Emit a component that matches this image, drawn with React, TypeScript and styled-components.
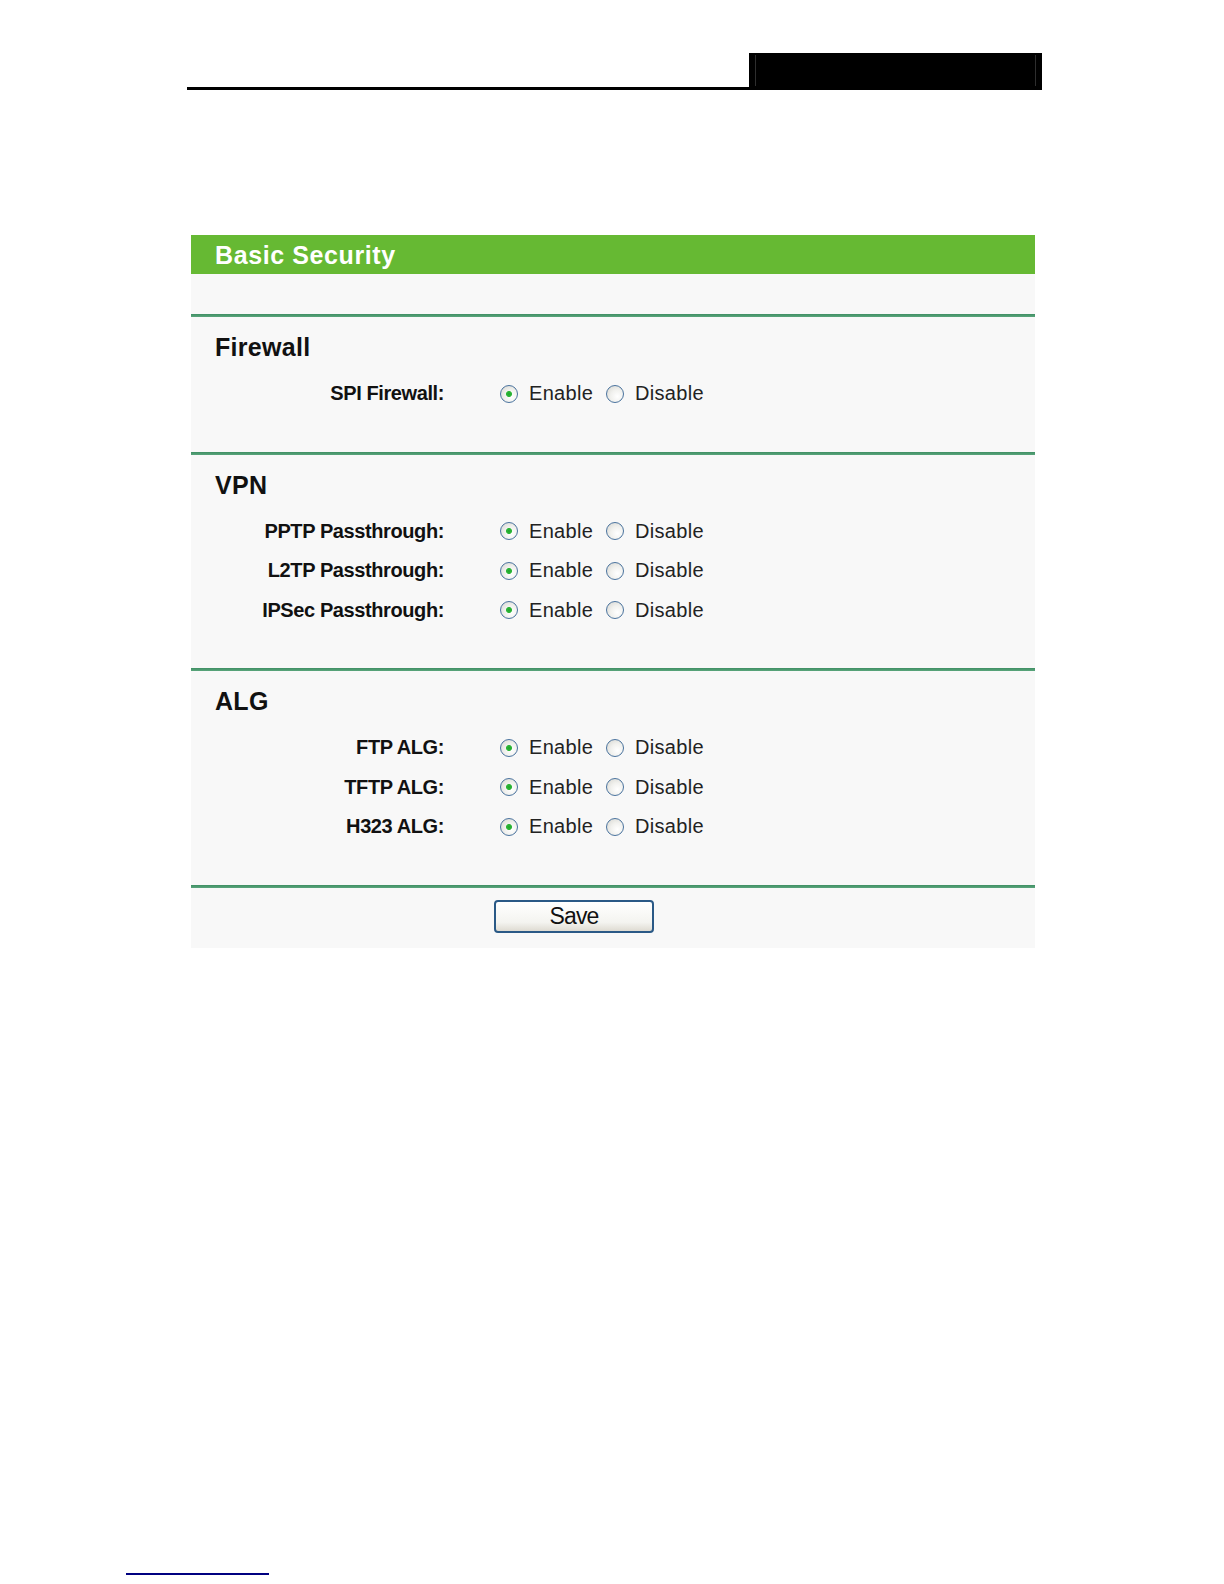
import { createGlobalStyle, styled } from "styled-components";

const GlobalStyle = createGlobalStyle`
    html, body {
        margin: 0;
        padding: 0;
        background: #ffffff;
    }
    body {
        font-family: "Liberation Sans", Arial, sans-serif;
        color: #000;
    }
`;

const Page = styled.div`
    width: 1224px;
    min-height: 1584px;
    display: flex;
    flex-direction: column;
`;

const TopBar = styled.header`
    display: flex;
    align-items: flex-end;
    width: 855px;
    height: 37px;
    margin: 53px 0 0 187px;
`;

const TopRule = styled.div`
    flex: 1;
    height: 3px;
    background: #000;
`;

const TopTab = styled.div`
    width: 293px;
    height: 37px;
    background: #000;
    box-sizing: border-box;
    padding: 2px 6px 4px;
    display: flex;
`;

const TopTabInner = styled.div`
    flex: 1;
    border-left: 1px solid #2e2e2e;
    border-right: 1px solid #2e2e2e;
`;

const Panel = styled.section`
    width: 844px;
    margin: 145px 0 0 191px;
    background: #f8f8f8;
    padding-bottom: 15px;
`;

const TitleBar = styled.h1`
    margin: 0;
    height: 39px;
    line-height: 40px;
    padding-left: 24px;
    background: #66b933;
    color: #fff;
    font-size: 25px;
    font-weight: bold;
    letter-spacing: 0.6px;
`;

const Spacer = styled.div`
    height: 40px;
`;

const Divider = styled.hr`
    margin: 0;
    border: none;
    height: 3px;
    background: linear-gradient(#3f8f63, #5aa57c);
`;

const Section = styled.div`
    padding: 15px 0 38px;
`;

const SectionTitle = styled.h2`
    margin: 0 0 12px 24px;
    height: 30px;
    line-height: 30px;
    font-size: 25px;
    font-weight: bold;
    letter-spacing: 0.3px;
    color: #111;
`;

const Row = styled.div`
    display: flex;
    align-items: center;
    height: 39.5px;
`;

const Label = styled.label`
    width: 253px;
    text-align: right;
    font-size: 20px;
    font-weight: bold;
    letter-spacing: -0.4px;
    color: #111;
`;

const Options = styled.div`
    display: flex;
    align-items: center;
    margin-left: 56px;
`;

const Radio = styled.input.attrs({ type: "radio" })`
    appearance: none;
    -webkit-appearance: none;
    width: 18px;
    height: 18px;
    margin: 0;
    border-radius: 50%;
    border: 1.5px solid #4a739e;
    box-sizing: border-box;
    background: radial-gradient(circle at 65% 65%, #ffffff 0, #f1f1ee 45%, #d4d4cf 100%);
    &:checked {
        background:
            radial-gradient(circle, #1fa32a 0, #2fb83a 2.6px, rgba(255, 255, 255, 0) 3.4px),
            radial-gradient(circle at 65% 65%, #ffffff 0, #f1f1ee 45%, #d4d4cf 100%);
    }
`;

const OptionText = styled.span<{ gapAfter?: number }>`
    font-size: 20px;
    letter-spacing: 0.3px;
    color: #222;
    margin: 0 ${({ gapAfter }) => gapAfter ?? 0}px 0 11px;
`;

const Footer = styled.div`
    padding-top: 12px;
`;

const SaveButton = styled.button`
    display: block;
    margin-left: 303px;
    width: 160px;
    height: 33px;
    border: 2px solid #2a5986;
    border-radius: 4px;
    background: linear-gradient(#ffffff, #f4f4f0 70%, #dedbd2);
    font-family: "Liberation Sans", Arial, sans-serif;
    font-size: 23px;
    letter-spacing: -0.8px;
    color: #111;
    padding: 0;
`;

const BottomLink = styled.div`
    margin: auto 0 9px 126px;
    width: 143px;
    height: 2px;
    background: #000080;
`;

type Setting = { label: string; name: string };

const sections: { title: string; items: Setting[] }[] = [
    { title: "Firewall", items: [{ label: "SPI Firewall:", name: "spi" }] },
    {
        title: "VPN",
        items: [
            { label: "PPTP Passthrough:", name: "pptp" },
            { label: "L2TP Passthrough:", name: "l2tp" },
            { label: "IPSec Passthrough:", name: "ipsec" },
        ],
    },
    {
        title: "ALG",
        items: [
            { label: "FTP ALG:", name: "ftp" },
            { label: "TFTP ALG:", name: "tftp" },
            { label: "H323 ALG:", name: "h323" },
        ],
    },
];

export default function App() {
    return (
        <Page>
            <GlobalStyle />
            <TopBar>
                <TopRule />
                <TopTab>
                    <TopTabInner />
                </TopTab>
            </TopBar>

            <Panel>
                <TitleBar>Basic Security</TitleBar>
                <Spacer />
                {sections.map((section) => (
                    <div key={section.title}>
                        <Divider />
                        <Section>
                            <SectionTitle>{section.title}</SectionTitle>
                            {section.items.map((item) => (
                                <Row key={item.name}>
                                    <Label>{item.label}</Label>
                                    <Options>
                                        <Radio name={item.name} defaultChecked />
                                        <OptionText gapAfter={13}>Enable</OptionText>
                                        <Radio name={item.name} />
                                        <OptionText>Disable</OptionText>
                                    </Options>
                                </Row>
                            ))}
                        </Section>
                    </div>
                ))}
                <Divider />
                <Footer>
                    <SaveButton>Save</SaveButton>
                </Footer>
            </Panel>

            <BottomLink />
        </Page>
    );
}
